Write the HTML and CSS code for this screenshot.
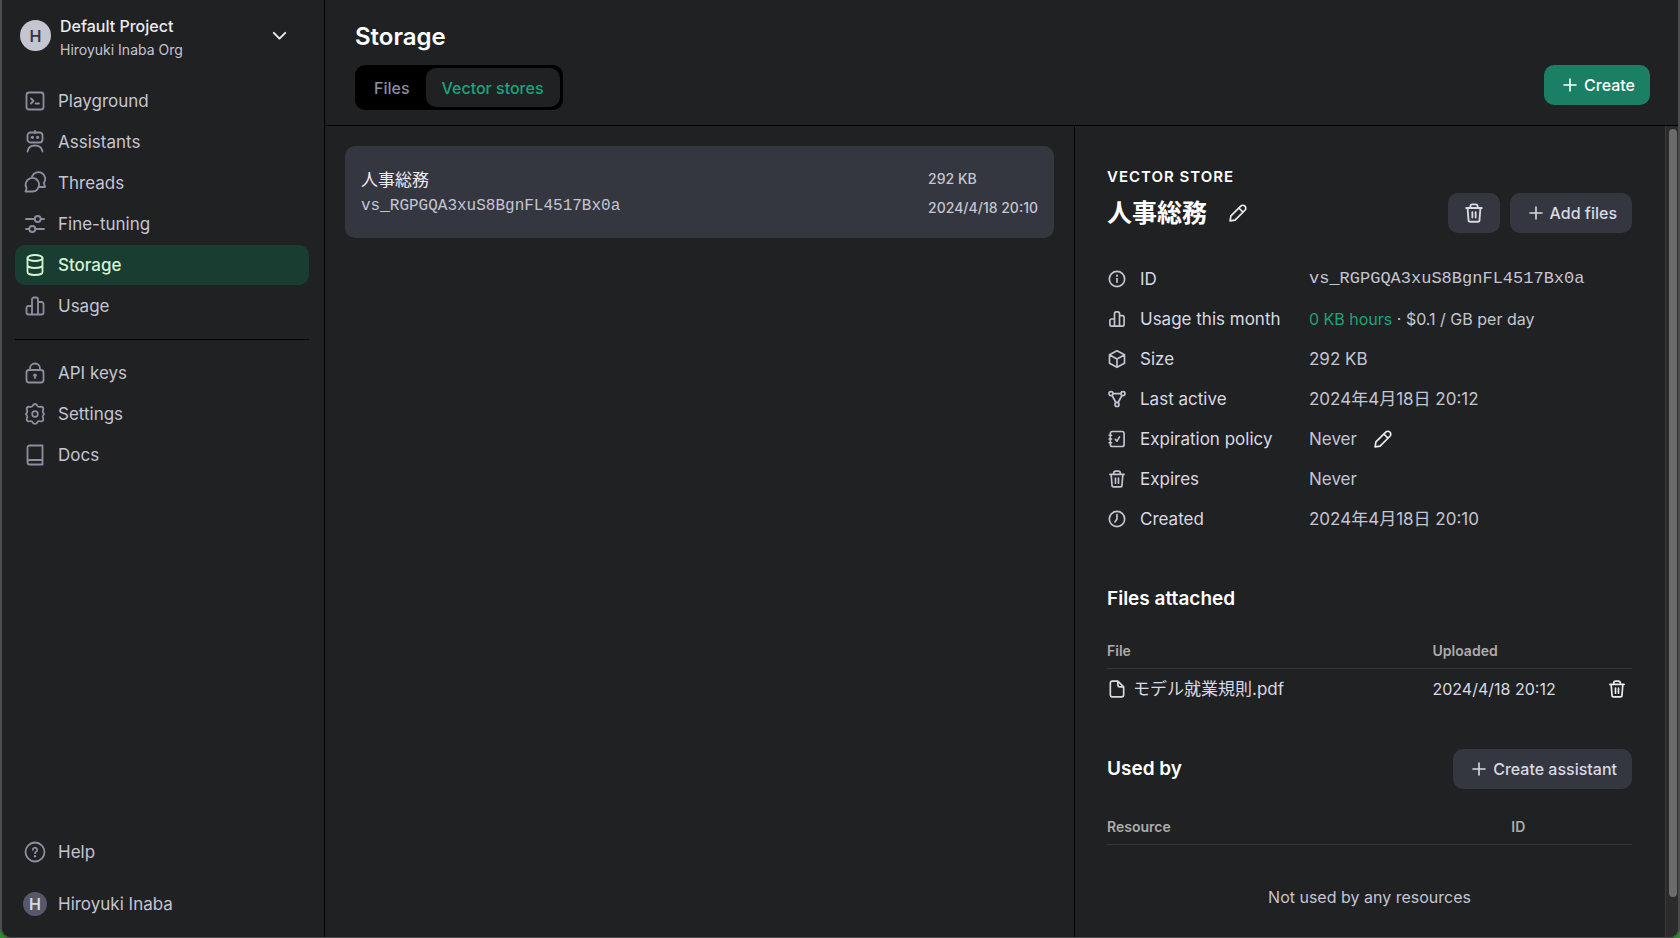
FILE: index.html
```html
<!DOCTYPE html>
<html lang="en">
<head>
  <meta charset="UTF-8" />
  <meta name="viewport" content="width=device-width, initial-scale=1.0"/>
  <title>Storage</title>
  <link rel="stylesheet" href="styles.css">
</head>
<body>
  <!-- icon set -->
  <svg class="sprite" aria-hidden="true">
    <symbol id="i-playground" viewBox="0 0 24 24"><rect x="3.5" y="3.5" width="17" height="17" rx="2.5"/><path d="M8 9.5l2.5 2.5L8 14.5M12.5 14.5H16"/></symbol>
    <symbol id="i-robot" viewBox="0 0 24 24"><path d="M12 1v2M4.500 21.500c.6-3.600 3.600-6 7.500-6s6.900 2.400 7.500 6"/><rect x="4.500" y="2.500" width="15" height="10" rx="3"/><circle class="dot" cx="9.400" cy="7.300" r="1.600"/><circle class="dot" cx="14.600" cy="7.300" r="1.600"/></symbol>
    <symbol id="i-threads" viewBox="0 0 24 24"><path d="M2.500 20.500l1.100-3.200a6.800 6.800 0 1 1 5.400 3.200z"/><path d="M9 5.600a6.800 6.800 0 1 1 11.900 6.300l1.100 4.100h-5.700"/></symbol>
    <symbol id="i-sliders" viewBox="0 0 24 24"><path d="M3 7h8.700M17.700 7H21M3 17h3.300M12.300 17H21"/><circle cx="14.700" cy="7" r="3"/><circle cx="9.300" cy="17" r="3"/></symbol>
    <symbol id="i-storage" viewBox="0 0 24 24"><ellipse cx="12" cy="5" rx="7.500" ry="3"/><path d="M4.500 5v14c0 1.700 3.400 3 7.500 3s7.500-1.300 7.500-3V5M4.500 12c0 1.700 3.400 3 7.500 3s7.500-1.300 7.500-3"/></symbol>
    <symbol id="i-usage" viewBox="0 0 24 24"><path d="M9 20.500V5.500a2 2 0 0 1 2-2h2a2 2 0 0 1 2 2v15M9 12H5.500a2 2 0 0 0-2 2v4.500a2 2 0 0 0 2 2h13a2 2 0 0 0 2-2V10a2 2 0 0 0-2-2H15"/></symbol>
    <symbol id="i-lock" viewBox="0 0 24 24"><rect x="3.500" y="9" width="17" height="12.500" rx="2.500"/><path d="M7 9V7.500a5 5 0 0 1 10 0V9M12 14.500v2.500"/><circle class="dot" cx="12" cy="14.300" r="1.800"/></symbol>
    <symbol id="i-settings" viewBox="0 0 24 24"><path d="M10.300 2.900q1.700-1.700 3.400 0l1.100 1.400q.7.700 1.700.5l1.800-.2q2.200.3 2 2.500l-.5 1.900q-.2.900.3 1.600l.9 1.400-.9 1.400q-.5.700-.3 1.600l.5 1.900q.2 2.200-2 2.500l-1.800-.2q-1-.2-1.700.5l-1.100 1.400q-1.700 1.700-3.400 0l-1.100-1.400q-.7-.7-1.700-.5l-1.800.2q-2.200-.3-2-2.500l.5-1.900q.2-.9-.3-1.600L3 12l.9-1.400q.5-.7.300-1.600l-.5-1.900q-.2-2.200 2-2.500l1.800.2q1 .2 1.700-.5z"/><circle cx="12" cy="12" r="2.800"/></symbol>
    <symbol id="i-docs" viewBox="0 0 24 24"><path d="M19.500 17H6.500a2 2 0 0 0-2 2.300 2 2 0 0 0 2 2.200h13v-19h-13a2 2 0 0 0-2 2v14.800"/></symbol>
    <symbol id="i-help" viewBox="0 0 24 24"><circle cx="12" cy="12" r="9.500"/><path d="M9.800 9.800a2.200 2.200 0 1 1 3.300 2q-1.100.6-1.100 1.500"/><circle class="dot" cx="12" cy="16.300" r="1.200"/></symbol>
    <symbol id="i-chevron" viewBox="0 0 24 24"><path d="M5.500 9l6.500 6.500L18.500 9"/></symbol>
    <symbol id="i-plus" viewBox="0 0 24 24"><path d="M12 3v18M3 12h18"/></symbol>
    <symbol id="i-pencil" viewBox="0 0 24 24"><path d="M2.500 21.500l1-6L15.300 3.700a3.500 3.500 0 0 1 5 5L8.500 20.500zM13 6l5 5"/></symbol>
    <symbol id="i-trash" viewBox="0 0 24 24"><path d="M3.500 6.500h17M5 6.500l1 13a2 2 0 0 0 2 2h8a2 2 0 0 0 2-2l1-13M8 6.500V5a2.500 2.500 0 0 1 2.500-2.500h3A2.500 2.500 0 0 1 16 5v1.500M10.200 11v6M13.800 11v6"/></symbol>
    <symbol id="i-info" viewBox="0 0 24 24"><circle cx="12" cy="12" r="9.200"/><path d="M12 11.500v4.500"/><circle class="dot" cx="12" cy="8" r="1.300"/></symbol>
    <symbol id="i-cube" viewBox="0 0 24 24"><path d="M12 2l9 5v10l-9 5-9-5V7zM3.300 7.200L12 12l8.700-4.800M12 12v9.500"/></symbol>
    <symbol id="i-nodes" viewBox="0 0 24 24"><circle cx="4.800" cy="5.500" r="2.400"/><circle cx="19.200" cy="5.500" r="2.400"/><circle cx="12" cy="18.500" r="2.400"/><path d="M7.400 5.500h9.200M6.100 7.800l4.600 8.400M17.900 7.800l-4.600 8.400"/></symbol>
    <symbol id="i-policy" viewBox="0 0 24 24"><rect x="4" y="3" width="16.500" height="18" rx="2.500"/><path d="M2.500 7.500h3M2.500 12h3M2.500 16.500h3M10 12.500l2 2 3-5"/></symbol>
    <symbol id="i-clock" viewBox="0 0 24 24"><circle cx="12" cy="12" r="9.200"/><path d="M12 6.500V12l-2.500 3.500"/></symbol>
    <symbol id="i-file" viewBox="0 0 24 24"><path d="M13 2.500H6.500A2.500 2.500 0 0 0 4 5v14a2.500 2.500 0 0 0 2.500 2.500h11A2.500 2.500 0 0 0 20 19V9.500zM13 2.500V7a2.500 2.500 0 0 0 2.500 2.500H20"/></symbol>
  </svg>

  <div class="window">
    <aside class="sidebar">
      <button class="project">
        <span class="avatar avatar-org">H</span>
        <span class="project-text">
          <span class="project-name">Default Project</span>
          <span class="project-org">Hiroyuki Inaba Org</span>
        </span>
        <svg class="icon icon-chevron"><use href="#i-chevron"/></svg>
      </button>

      <nav class="nav nav-main">
        <a class="nav-item" href="#"><svg class="icon"><use href="#i-playground"/></svg>Playground</a>
        <a class="nav-item" href="#"><svg class="icon"><use href="#i-robot"/></svg>Assistants</a>
        <a class="nav-item" href="#"><svg class="icon"><use href="#i-threads"/></svg>Threads</a>
        <a class="nav-item" href="#"><svg class="icon"><use href="#i-sliders"/></svg>Fine-tuning</a>
        <a class="nav-item active" href="#"><svg class="icon"><use href="#i-storage"/></svg>Storage</a>
        <a class="nav-item" href="#"><svg class="icon"><use href="#i-usage"/></svg>Usage</a>
      </nav>

      <nav class="nav nav-secondary">
        <a class="nav-item" href="#"><svg class="icon"><use href="#i-lock"/></svg>API keys</a>
        <a class="nav-item" href="#"><svg class="icon"><use href="#i-settings"/></svg>Settings</a>
        <a class="nav-item" href="#"><svg class="icon"><use href="#i-docs"/></svg>Docs</a>
      </nav>

      <div class="nav nav-bottom">
        <a class="nav-item" href="#"><svg class="icon"><use href="#i-help"/></svg>Help</a>
        <a class="nav-item" href="#"><span class="avatar avatar-user">H</span>Hiroyuki Inaba</a>
      </div>
    </aside>

    <main class="main">
      <header class="header">
        <h1>Storage</h1>
        <div class="header-row">
          <div class="tabs">
            <button class="tab">Files</button>
            <button class="tab selected">Vector stores</button>
          </div>
          <button class="button primary"><svg class="icon icon-plus"><use href="#i-plus"/></svg>Create</button>
        </div>
      </header>

      <div class="content">
        <section class="list">
          <a class="store" href="#">
            <span class="store-info">
              <span class="store-name">人事総務</span>
              <span class="store-id">vs_RGPGQA3xuS8BgnFL4517Bx0a</span>
            </span>
            <span class="store-meta">
              <span>292 KB</span>
              <span>2024/4/18 20:10</span>
            </span>
          </a>
        </section>

        <section class="detail">
          <div class="detail-body">
            <p class="eyebrow">VECTOR STORE</p>
            <div class="row">
              <h2 class="detail-title">人事総務</h2>
              <button class="icon-button" aria-label="Rename"><svg class="icon icon-small"><use href="#i-pencil"/></svg></button>
              <div class="actions">
                <button class="button" aria-label="Delete"><svg class="icon icon-medium"><use href="#i-trash"/></svg></button>
                <button class="button"><svg class="icon icon-plus"><use href="#i-plus"/></svg>Add files</button>
              </div>
            </div>

            <dl class="props">
              <dt><svg class="icon icon-small"><use href="#i-info"/></svg>ID</dt>
              <dd class="mono">vs_RGPGQA3xuS8BgnFL4517Bx0a</dd>
              <dt><svg class="icon icon-small"><use href="#i-usage"/></svg>Usage this month</dt>
              <dd class="usage"><a href="#">0 KB hours</a>&nbsp;· $0.1 / GB per day</dd>
              <dt><svg class="icon icon-small"><use href="#i-cube"/></svg>Size</dt>
              <dd>292 KB</dd>
              <dt><svg class="icon icon-small"><use href="#i-nodes"/></svg>Last active</dt>
              <dd>2024年4月18日 20:12</dd>
              <dt><svg class="icon icon-small"><use href="#i-policy"/></svg>Expiration policy</dt>
              <dd>Never <button class="icon-button" aria-label="Edit policy"><svg class="icon icon-small"><use href="#i-pencil"/></svg></button></dd>
              <dt><svg class="icon icon-small"><use href="#i-trash"/></svg>Expires</dt>
              <dd>Never</dd>
              <dt><svg class="icon icon-small"><use href="#i-clock"/></svg>Created</dt>
              <dd>2024年4月18日 20:10</dd>
            </dl>

            <h3 class="files-heading">Files attached</h3>
            <table class="table">
              <thead>
                <tr><th class="col-file">File</th><th>Uploaded</th><th aria-label="Actions"></th></tr>
              </thead>
              <tbody>
                <tr>
                  <td><span class="file"><svg class="icon icon-small"><use href="#i-file"/></svg>モデル就業規則.pdf</span></td>
                  <td>2024/4/18 20:12</td>
                  <td class="cell-action"><button class="icon-button" aria-label="Remove file"><svg class="icon icon-small"><use href="#i-trash"/></svg></button></td>
                </tr>
              </tbody>
            </table>

            <div class="row used-by">
              <h3>Used by</h3>
              <div class="actions">
                <button class="button"><svg class="icon icon-plus"><use href="#i-plus"/></svg>Create assistant</button>
              </div>
            </div>
            <table class="table">
              <thead>
                <tr><th class="col-resource">Resource</th><th>ID</th></tr>
              </thead>
              <tbody>
                <tr><td class="empty" colspan="2">Not used by any resources</td></tr>
              </tbody>
            </table>
          </div>
          <div class="scrollbar"><div class="thumb"></div></div>
        </section>
      </div>
    </main>
  </div>
</body>
</html>
```
FILE: styles.css
```css
* {
  box-sizing: border-box;
}

body {
  margin: 0;
  background: #2f8a2c;
  color: #c5c5d2;
  font-family: Inter, "Noto Sans CJK JP", sans-serif;
  font-size: 17px;
  line-height: 24px;
}

h1, h2, h3, p, dl, dd {
  margin: 0;
}

h1, h2, h3 {
  color: #fff;
  font-weight: 600;
}

a {
  color: inherit;
  text-decoration: none;
}

button {
  padding: 0;
  border: 0;
  background: none;
  color: inherit;
  font: inherit;
  cursor: pointer;
}

.sprite {
  display: none;
}

.icon {
  flex: none;
  width: 24px;
  height: 24px;
  fill: none;
  stroke: currentColor;
  stroke-width: 1.8;
  stroke-linecap: round;
  stroke-linejoin: round;
}

.icon-small {
  width: 20px;
  height: 20px;
  stroke-width: 2;
}

.icon-medium {
  width: 22px;
  height: 22px;
  stroke-width: 2;
}

.icon-plus {
  width: 16px;
  height: 16px;
  stroke-width: 2.4;
}

.icon-chevron {
  width: 21px;
  height: 21px;
  stroke-width: 2.2;
}

.dot {
  fill: currentColor;
  stroke: none;
}

.window {
  display: flex;
  min-height: 100vh;
  background: #202123;
  border: solid #4b4c4e;
  border-width: 0 2px 1px;
  border-radius: 0 0 10px 10px;
  overflow: hidden;
}

/* sidebar */
.sidebar {
  flex: none;
  display: flex;
  flex-direction: column;
  width: 323px;
  padding: 15px 15px 13px 13px;
  border-right: 1px solid #000;
}

.project {
  display: flex;
  align-items: flex-start;
  gap: 9px;
  padding: 0 19px 0 5px;
  text-align: left;
}

.project-text {
  flex: 1;
  display: flex;
  flex-direction: column;
  line-height: 23px;
}

.project-name {
  color: #ececf1;
  font-size: 16px;
  font-weight: 500;
}

.project-org {
  font-size: 14px;
}

.project .avatar {
  margin-top: 5px;
}

.project .icon {
  margin-top: 10px;
  color: #ececf1;
}

.avatar {
  flex: none;
  display: flex;
  align-items: center;
  justify-content: center;
  border-radius: 50%;
  font-size: 16px;
  font-weight: 600;
}

.avatar-org {
  width: 31px;
  height: 31px;
  background: #c5c5d2;
  color: #353740;
}

.avatar-user {
  width: 24px;
  height: 24px;
  background: #565869;
  color: #d9d9e3;
}

.nav {
  display: flex;
  flex-direction: column;
  gap: 1px;
}

.nav-main {
  margin-top: 20px;
  padding-bottom: 13px;
  border-bottom: 1px solid #000;
}

.nav-secondary {
  margin-top: 13px;
}

.nav-bottom {
  gap: 12px;
  margin-top: auto;
}

.nav-item {
  display: flex;
  align-items: center;
  gap: 11px;
  height: 40px;
  padding: 0 8px;
  border-radius: 10px;
}

.nav-item .icon {
  color: #8e8ea0;
}

.nav-item.active {
  background: #1a3d31;
  color: #d2f4d3;
  font-weight: 500;
}

.nav-item.active .icon {
  color: #d2f4d3;
}

/* header */
.main {
  flex: 1;
  display: flex;
  flex-direction: column;
  min-width: 0;
}

.header {
  padding: 23px 28px 15px 30px;
  border-bottom: 1px solid #000;
}

h1 {
  font-size: 24px;
  line-height: 28px;
}

.header-row {
  display: flex;
  align-items: flex-start;
  justify-content: space-between;
  margin-top: 14px;
}

.tabs {
  display: flex;
  padding: 3px;
  background: #000;
  border-radius: 10px;
}

.tab {
  height: 39px;
  padding: 0 16px;
  border-radius: 10px;
  color: #8e8ea0;
  font-size: 16px;
  font-weight: 500;
}

.tab.selected {
  background: #202123;
  color: #19a57d;
}

.button {
  display: flex;
  align-items: center;
  gap: 6px;
  height: 40px;
  padding: 0 15px 0 18px;
  border-radius: 10px;
  background: #353740;
  color: #d9d9e3;
  font-size: 16px;
  font-weight: 500;
}

.button.primary {
  background: #1a7f64;
  color: #fff;
}

.content {
  flex: 1;
  display: flex;
}

/* vector store list */
.list {
  flex: 1;
  min-width: 0;
  padding: 20px;
}

.store {
  display: flex;
  align-items: center;
  justify-content: space-between;
  padding: 18px 16px 16px;
  border-radius: 10px;
  background: #353740;
}

.store-info,
.store-meta {
  display: flex;
  flex-direction: column;
}

.store-info {
  line-height: 26px;
}

.store-name {
  color: #ececf1;
}

.store-id,
.mono {
  font-family: "Liberation Mono", monospace;
}

.store-id {
  font-size: 16px;
}

.store-meta {
  font-size: 14px;
  font-weight: 500;
  line-height: 29px;
}

/* detail panel */
.detail {
  flex: none;
  display: flex;
  width: 604px;
  border-left: 1px solid #000;
}

.detail-body {
  flex: 1;
  padding: 40px 33px 20px 32px;
}

.eyebrow {
  color: #fff;
  font-size: 15px;
  font-weight: 600;
  letter-spacing: 1px;
  line-height: 22px;
}

.row {
  display: flex;
  align-items: center;
  margin-top: 5px;
}

.detail-title {
  margin-right: 21px;
  font-size: 25px;
}

.actions {
  display: flex;
  gap: 10px;
  margin-left: auto;
}

.actions .button[aria-label] {
  padding: 0 15px;
}

.icon-button {
  display: flex;
  color: #ececf1;
}

.props {
  display: grid;
  grid-template-columns: 202px 1fr;
  grid-auto-rows: 40px;
  align-items: center;
  margin-top: 26px;
}

.props dt {
  display: flex;
  align-items: center;
  gap: 13px;
  color: #d9d9e3;
}

.props dt .icon {
  color: #c5c5d2;
}

.props dd {
  display: flex;
  align-items: center;
}

.props .icon-button {
  margin-left: 16px;
}

.props .usage {
  font-size: 16px;
}

.usage a {
  color: #19a57d;
}

h3 {
  font-size: 19px;
  line-height: 28px;
}

.files-heading {
  margin-top: 46px;
}

.table {
  width: 100%;
  margin-top: 20px;
  border-spacing: 0;
}

.table th {
  height: 36px;
  padding: 0;
  border-bottom: 1px solid #353740;
  color: #acacac;
  font-size: 14px;
  font-weight: 600;
  text-align: left;
}

.table td {
  height: 40px;
  padding: 0;
  color: #d9d9e3;
  font-size: 16px;
}

.col-file {
  width: 62%;
}

.col-resource {
  width: 77%;
}

.file {
  display: flex;
  align-items: center;
  gap: 6px;
  font-size: 17px;
}

.cell-action .icon-button {
  margin-left: auto;
  margin-right: 5px;
}

.used-by {
  margin-top: 40px;
}

.table .empty {
  padding: 40px 0 0;
  color: #c5c5d2;
  text-align: center;
}

.scrollbar {
  flex: none;
  display: flex;
  width: 13px;
  padding: 3px 1px 40px 3px;
  border-left: 1px solid #38393b;
  background: #2b2b2c;
}

.thumb {
  flex: 1;
  border-radius: 4px;
  background: #6b6b6b;
}
```
